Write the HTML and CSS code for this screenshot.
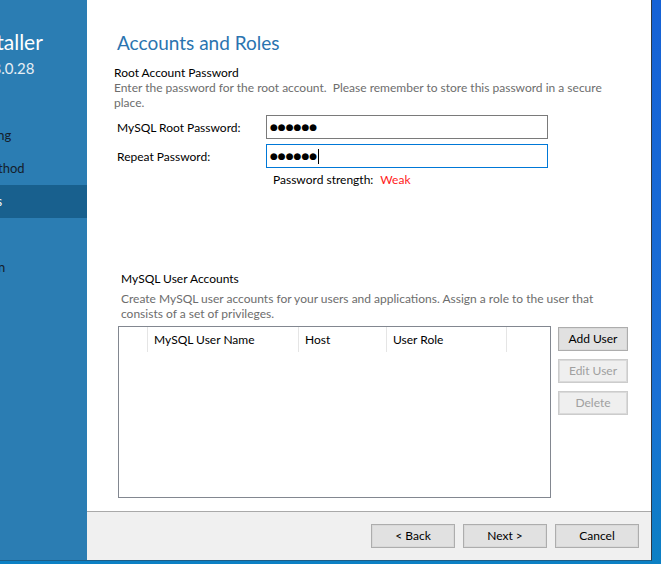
FILE: index.html
```html
<!DOCTYPE html>
<html lang="en">
<head>
<meta charset="utf-8">
<title>MySQL Installer - Accounts and Roles</title>
<link rel="stylesheet" href="styles.css">
</head>
<body>
<div class="window">
  <aside class="sidebar">
    <div class="sidebar-inner">
      <div class="brand-title">MySQL Installer</div>
      <div class="brand-sub">MySQL Server 8.0.28</div>
      <ul class="steps">
        <li class="step first">Type and Networking</li>
        <li class="step">Authentication Method</li>
        <li class="step active">Accounts and Roles</li>
        <li class="step">Windows Service</li>
        <li class="step">Apply Configuration</li>
      </ul>
    </div>
  </aside>
  <div class="main">
    <div class="content">
      <h1 class="page-title">Accounts and Roles</h1>

      <div class="section-title">Root Account Password</div>
      <p class="section-desc">Enter the password for the root account.&nbsp; Please remember to store this password in a secure place.</p>

      <div class="form-row">
        <label class="form-label">MySQL Root Password:</label>
        <div class="field"><span class="dots">●●●●●●</span></div>
      </div>
      <div class="form-row">
        <label class="form-label">Repeat Password:</label>
        <div class="field focused"><span class="dots">●●●●●●</span><span class="caret"></span></div>
      </div>
      <div class="strength">Password strength:<span class="weak">Weak</span></div>

      <div class="users">
        <div class="section-title users-title">MySQL User Accounts</div>
        <p class="section-desc users-desc">Create MySQL user accounts for your users and applications. Assign a role to the user that consists of a set of privileges.</p>
        <div class="users-body">
          <div class="table">
            <div class="thead">
              <div class="th c0"></div>
              <div class="th c1">MySQL User Name</div>
              <div class="th c2">Host</div>
              <div class="th c3">User Role</div>
            </div>
          </div>
          <div class="side-buttons">
            <button class="btn small">Add User</button>
            <button class="btn small" disabled>Edit User</button>
            <button class="btn small" disabled>Delete</button>
          </div>
        </div>
      </div>
    </div>
    <footer class="footer">
      <button class="btn wide">&lt; Back</button>
      <button class="btn wide">Next &gt;</button>
      <button class="btn wide">Cancel</button>
    </footer>
  </div>
</div>
</body>
</html>
```

FILE: styles.css
```css
html, body {
  margin: 0;
  padding: 0;
}
body {
  width: 661px;
  height: 564px;
  overflow: hidden;
  background: linear-gradient(180deg, #1562d6 0%, #1a70d4 70%, #0c80c4 100%);
  font-family: "Lato", "Liberation Sans", sans-serif;
  font-size: 12px;
  color: #000;
}
.window {
  display: flex;
  width: 651px;
  height: 560px;
  border-right: 1px solid #2e3a46;
  border-bottom: 1px solid #1d5d86;
  background: #fff;
}

/* Sidebar */
.sidebar {
  flex: none;
  width: 87px;
  background: #2b7db3;
  overflow: hidden;
}
.sidebar-inner {
  margin-left: -100px;
  width: 240px;
}
.brand-title {
  margin: 30px 0 0 -4px;
  font-size: 21px;
  line-height: 24px;
  color: #fff;
  white-space: nowrap;
}
.brand-sub {
  margin: 5px 0 0 -6px;
  font-size: 15px;
  line-height: 18px;
  color: #e6eef5;
  white-space: nowrap;
}
.steps {
  list-style: none;
  margin: 42px 0 0;
  padding: 0;
}
.step {
  height: 33px;
  line-height: 33px;
  text-indent: -9px;
  font-size: 13px;
  color: #15202b;
  white-space: nowrap;
}
.step.first {
  text-indent: -11px;
}
.step.active {
  background: #18608e;
  color: #fff;
}

/* Main */
.main {
  flex: 1;
  display: flex;
  flex-direction: column;
}
.content {
  flex: 1;
  padding-left: 27px;
}
.page-title {
  margin: 31px 0 0 3px;
  font-size: 19px;
  line-height: 24px;
  font-weight: 400;
  color: #2a74b0;
}
.section-title {
  margin-top: 10px;
  line-height: 15px;
  color: #000;
}
.section-desc {
  margin: 0;
  width: 500px;
  line-height: 15px;
  color: #6d6d6d;
}
.form-row {
  display: flex;
  align-items: center;
  margin-top: 5px;
  padding-left: 3px;
}
.form-row:first-of-type {
  margin-top: 4px;
}
.form-label {
  width: 149px;
  line-height: 15px;
}
.field {
  display: flex;
  align-items: center;
  box-sizing: border-box;
  width: 282px;
  height: 24px;
  padding-left: 3px;
  border: 1px solid #7a7a7a;
}
.field.focused {
  border-color: #0078d7;
}
.dots {
  font-family: "DejaVu Sans", sans-serif;
  font-size: 9px;
  line-height: 14px;
}
.caret {
  width: 1px;
  height: 15px;
  margin-left: 1px;
  background: #000;
}
.strength {
  margin: 4px 0 0 159px;
  line-height: 15px;
}
.weak {
  margin-left: 7px;
  color: #ff1a1a;
}

/* Users */
.users {
  margin-top: 84px;
  padding-left: 7px;
}
.users-title {
  margin-top: 0;
}
.users-desc {
  width: 480px;
  margin-top: 5px;
}
.users-body {
  display: flex;
  align-items: flex-start;
  gap: 7px;
  margin-top: 5px;
  margin-left: -3px;
}
.table {
  box-sizing: border-box;
  width: 433px;
  height: 172px;
  border: 1px solid #828790;
  background: #fff;
}
.thead {
  display: flex;
  height: 25px;
}
.th {
  box-sizing: border-box;
  height: 25px;
  line-height: 25px;
  padding-left: 6px;
  border-right: 1px solid #e5e5e5;
  white-space: nowrap;
}
.c0 { width: 29px; }
.c1 { width: 151px; }
.c2 { width: 88px; }
.c3 { width: 120px; }

.side-buttons {
  display: flex;
  flex-direction: column;
  gap: 8px;
  padding-top: 1px;
}

/* Buttons */
.btn {
  box-sizing: border-box;
  height: 24px;
  padding: 0 0 2px;
  font-family: inherit;
  font-size: 12px;
  color: #000;
  background: #e1e1e1;
  border: 1px solid #adadad;
  box-shadow: inset 0 0 0 1px #d9d9d9;
  border-radius: 0;
}
.btn:disabled {
  color: #a0a0a0;
  background: #efefef;
  border-color: #cccccc;
  box-shadow: inset 0 0 0 1px #dadada;
}
.btn.small {
  width: 70px;
}
.btn.wide {
  width: 84px;
}

.footer {
  flex: none;
  display: flex;
  justify-content: flex-end;
  gap: 8px;
  box-sizing: border-box;
  height: 49px;
  padding: 12px 12px 0 0;
  background: #f0f0f0;
  border-top: 1px solid #a9a9a9;
}
```
